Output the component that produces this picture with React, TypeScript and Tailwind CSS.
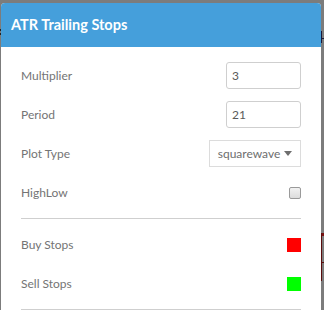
import React from "react";

const font = { fontFamily: "Lato, 'Open Sans', 'Noto Sans', sans-serif" };

function Row({ label, children }: { label: string; children?: React.ReactNode }) {
  return (
    <div className="flex h-[39px] items-center justify-between">
      <span className="text-[12px] text-[#747474]">{label}</span>
      {children}
    </div>
  );
}

export default function App() {
  return (
    <div className="relative h-[310px] w-[324px] overflow-hidden bg-[#7c7c7c]" style={font}>
      {/* background chart bits peeking out */}
      <div className="absolute left-0 top-[29px] h-[2px] w-[2px] bg-[#222]" />
      <div className="absolute left-0 top-[33px] h-[2px] w-[2px] bg-[#222]" />
      <div className="absolute left-[321px] top-[31px] h-[12px] w-[1px] bg-[#1a1a3a]" />
      <div className="absolute left-[321px] top-[38px] h-[1px] w-[3px] bg-[#1a1a3a]" />
      <div className="absolute left-[321px] top-[233px] h-[3px] w-[3px] bg-[#7a1010]" />
      <div className="absolute left-[321px] top-[233px] h-[48px] w-[1px] bg-[#5a0c0c]" />
      <div className="absolute left-[321px] top-[262px] h-[1px] w-[3px] bg-[#5a0c0c]" />

      <div className="absolute left-[1px] top-[3px] w-[320px] overflow-hidden rounded-t-[4px] bg-white">
        <div className="flex h-[44px] items-center bg-[#459fdb] px-[10px]">
          <span className="text-[14.5px] font-bold text-white">ATR Trailing Stops</span>
        </div>
        <div className="px-5 pt-[9px]">
          <Row label="Multiplier">
            <div className="flex h-[27px] w-[75px] items-center rounded-[3px] border border-[#cfcfcf] px-[5px] text-[12px] text-[#5a5a5a]">
              3
            </div>
          </Row>
          <Row label="Period">
            <div className="flex h-[27px] w-[75px] items-center rounded-[3px] border border-[#cfcfcf] px-[5px] text-[12px] text-[#5a5a5a]">
              21
            </div>
          </Row>
          <Row label="Plot Type">
            <div className="flex h-[27px] w-[92px] items-center justify-center gap-[4px] border border-[#dcdcdc] text-[12px] text-[#6e6e6e]">
              <span>squarewave</span>
              <svg width="8" height="5" viewBox="0 0 8 5">
                <path d="M0 0 L8 0 L4 5 Z" fill="#6e6e6e" />
              </svg>
            </div>
          </Row>
          <Row label="HighLow">
            <div className="h-[12px] w-[12px] rounded-[2px] border border-[#9a9a9a] bg-gradient-to-b from-[#f2f2f2] to-[#dcdcdc]" />
          </Row>
          <div className="my-[6px] h-px bg-[#cfcfcf]" />
          <Row label="Buy Stops">
            <div className="h-[14px] w-[14px] bg-[#ff0000]" />
          </Row>
          <Row label="Sell Stops">
            <div className="h-[14px] w-[14px] bg-[#00ff00]" />
          </Row>
          <div className="mt-[6px] h-px bg-[#cfcfcf]" />
          <div className="h-[20px]" />
        </div>
      </div>
    </div>
  );
}
